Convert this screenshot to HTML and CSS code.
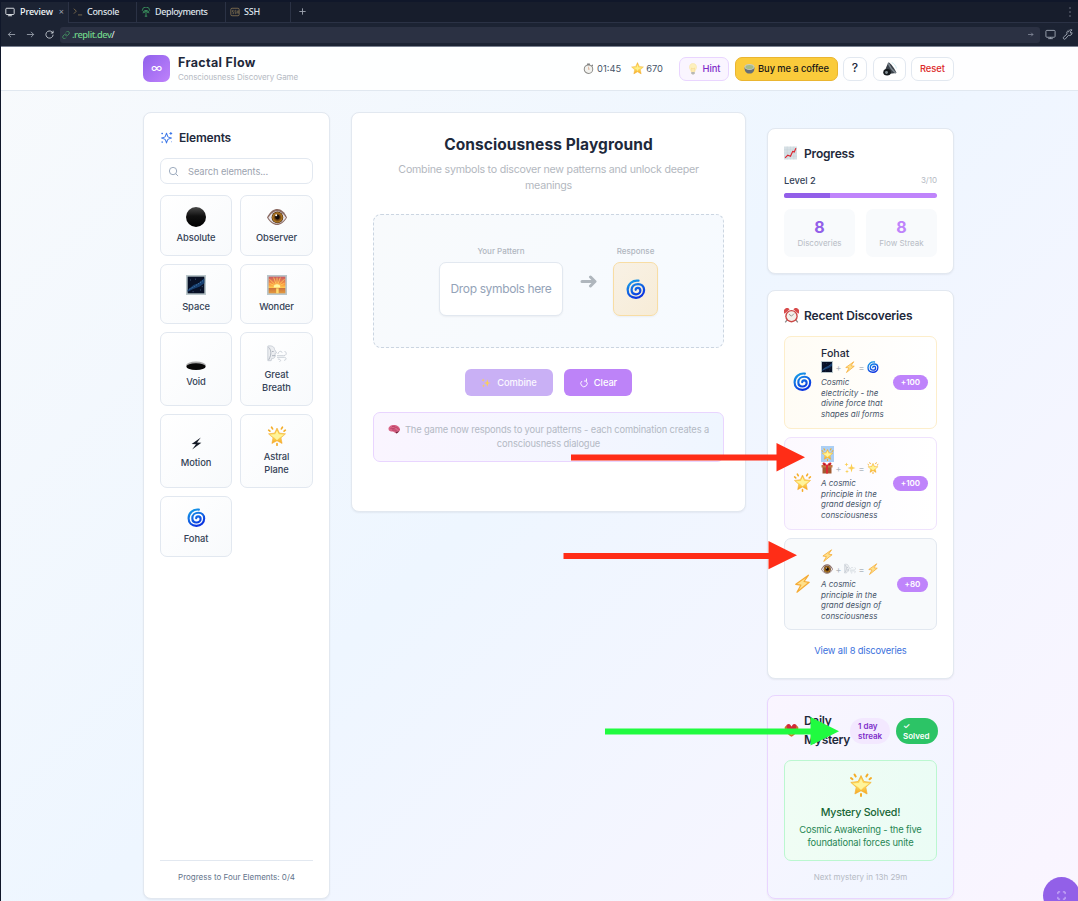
FILE: index.html
```html
<!DOCTYPE html>
<html lang="en">
<head>
<meta charset="utf-8">
<title>Fractal Flow</title>
<link rel="stylesheet" href="styles.css">
</head>
<body>
<svg class="sprite" aria-hidden="true">
  <defs>
    <linearGradient id="g-blue" x1="0" y1="0" x2="0.5" y2="1"><stop offset="0" stop-color="#19a5e8"/><stop offset="1" stop-color="#0a35e0"/></linearGradient>
    <linearGradient id="g-gold" x1="0" y1="0" x2="0" y2="1"><stop offset="0" stop-color="#f9b429"/><stop offset="0.5" stop-color="#fde36a"/><stop offset="1" stop-color="#f6a51c"/></linearGradient>
    <linearGradient id="g-black" x1="0" y1="0" x2="0" y2="1"><stop offset="0" stop-color="#4a4a4a"/><stop offset="0.45" stop-color="#111"/><stop offset="1" stop-color="#000"/></linearGradient>
    <linearGradient id="g-sun" x1="0" y1="0" x2="0" y2="1"><stop offset="0" stop-color="#c95b62"/><stop offset="0.45" stop-color="#fb9440"/><stop offset="0.65" stop-color="#ffc84d"/><stop offset="0.66" stop-color="#c9713e"/><stop offset="1" stop-color="#e59a3d"/></linearGradient>
    <radialGradient id="g-iris"><stop offset="0.2" stop-color="#1a0d05"/><stop offset="0.45" stop-color="#5b3510"/><stop offset="1" stop-color="#c98b25"/></radialGradient>
  </defs>
  <symbol id="orb" viewBox="0 0 24 24"><circle cx="12" cy="12" r="12" fill="url(#g-black)"/></symbol>
  <symbol id="eye" viewBox="0 0 24 24"><path d="M0 12.500C4 5 8 2.500 12.500 2.500S21 6 24 12.500C20 19 16 21.500 12 21.500S4 19 0 12.500z" fill="#8b6b63"/><path d="M1.500 13C5 7 9 5 12.500 5S20 8 22.800 13C19 18 16 20 12 20S5 18 1.500 13z" fill="#e9e5ea"/><circle cx="12.500" cy="12.500" r="7" fill="#4a2b14"/><circle cx="12.500" cy="12.500" r="6.200" fill="url(#g-iris)"/><circle cx="12.500" cy="12" r="2.600" fill="#120a08"/><circle cx="11" cy="10" r="1.200" fill="#fff"/></symbol>
  <symbol id="space" viewBox="0 0 24 24"><path fill="#b9c6ca" d="M0 0h24v24H0z"/><path fill="#081127" d="M2 2h20v20H2z"/><path d="M2 18L9 12L15 10L22 4V10L16 14L8 17L2 20z" fill="#173f70"/><path d="M4 17L10 14L14 11L20 7" fill="none" stroke="#5585b3" stroke-width="1.100" stroke-dasharray="1.300 1.700"/><path d="M5 6h1M11 5h1M17 18h1M19 14h1M8 20h1" stroke="#51709b"/></symbol>
  <symbol id="sunrise" viewBox="0 0 24 24"><path fill="#b9c6ca" d="M0 0h24v24H0z"/><path fill="url(#g-sun)" d="M2 2h20v20H2z"/><path d="M12 14L3 5M12 14L8 3M12 14V3M12 14L16 3M12 14L21 5M12 14L3 10M12 14L21 10" stroke="#ffd85c" stroke-width=".9"/><path d="M8 15a4 4 0 0 1 8 0z" fill="#fff6a2"/><path d="M11 16h3v6h-3z" fill="#ffdb6d"/></symbol>
  <symbol id="hole" viewBox="0 0 24 24"><ellipse cx="12" cy="18.800" rx="12" ry="5" fill="#aaa"/><ellipse cx="12" cy="20" rx="11.500" ry="4" fill="#080808"/></symbol>
  <symbol id="wind" viewBox="0 0 24 24"><g fill="none" stroke="#c3c9d1" stroke-width="1"><path d="M1 2.500c5-1 8 1 8 4l2.500 4-2 1c1 5-1 6-4 6L5 20H1z" fill="#eceef1"/><path d="M2 4c3 3 4 8 0 15M6 9h2M6 14h4" stroke="#a3abb6"/><path d="M13 12c1-4 5-4 5-1.500M12 14h8c4 0 4-5 1-5M12 16h9c3 0 2 4-.500 3.500M13 18c4 0 4 3 2 3"/></g></symbol>
  <symbol id="swirl" viewBox="0 0 24 24"><path d="M15 2C8 1 2 6 2 13c0 6 4 9.500 10 9.500 5.500 0 9.700-4 9.700-9.300C21.700 8.500 18.500 6 14.500 6 10 6 6.700 9 6.700 13s2.500 5.300 5.300 5.300c3 0 5.200-2 5.200-4.500 0-2-1.300-3.300-3-3.300-1.600 0-2.600 1.100-2.600 2.500" fill="none" stroke="url(#g-blue)" stroke-linecap="round" stroke-width="2.700"/></symbol>
  <symbol id="star" viewBox="0 0 24 24"><path d="M12 1l3.300 7.100 7.700.9-5.700 5.300 1.500 7.700L12 18.200 5.200 22l1.500-7.700L1 9l7.700-.9z" fill="url(#g-gold)" stroke="#f3b33c" stroke-width=".8"/><path d="M12 4l1.500 6 5 .500-4.500 3-2 3-2-3-4.500-3 5-.5z" fill="#fff08c"/></symbol>
  <symbol id="glow" viewBox="0 0 24 24"><path d="M12 2.500l2.900 6 7.300.9-5.400 4.800 1.300 6.800L12 17.700 5.900 21l1.300-6.800L1.800 9.400l7.300-.9z" fill="url(#g-gold)" stroke="#f5ad32" stroke-width=".7" stroke-linejoin="round"/><path d="M12 5l2 5 6 .500-5 3.500-3 3-3-3-5-3.500 6-.5z" fill="#fff49b"/><path d="M5.500 1.500l1.200 2M18.500 1.500l-1.200 2M2 5l1.500 1.200M22 5l-1.500 1.200M12 21v2" stroke="#f4ad28" stroke-width="2" stroke-linecap="round"/></symbol>
  <symbol id="bolt" viewBox="0 0 24 24"><path d="M19.500 1.500L3.500 13l6.500 1L5 23l15.500-12.500-6.500-1z" fill="#ffe08a" stroke="#f5ab35" stroke-width="1.500" stroke-linejoin="round"/></symbol>
  <symbol id="zap" viewBox="0 0 24 24"><path d="M20 1L3 13l8 .5L4 23l17-12.500-8-.5z" fill="#151b27"/></symbol>
  <symbol id="sparkle" viewBox="0 0 24 24"><path d="M15 3l2 7 6 2-6 2-2 7-2-7-6-2 6-2zM5 1l1.200 3L9 5 6.200 6 5 9 3.800 6 1 5l2.800-1zM6 15l1 3 3 1-3 1-1 3-1-3-3-1 3-1z" fill="#fbcf55"/></symbol>
  <symbol id="gift" viewBox="0 0 24 24"><path fill="#a25a32" d="M3 10h18v13H3z"/><path fill="#c37642" d="M1 6h22v5H1z"/><path fill="#dd2834" d="M10 6h4v17h-4zM12 7C3 8 1 2 5 1s7 6 7 6 3-7 7-6 2 7-7 6z"/><path d="M5 4l3 2M19 4l-3 2" stroke="#87131d" stroke-width="1.500"/></symbol>
  <symbol id="heart-box" viewBox="0 0 24 24"><path d="M1 7c2-5 9-4 11-1 2-3 9-4 11 1 0 6-5 11-11 15C6 18 1 13 1 7z" fill="#c97a2d"/><path d="M4 3c5-4 7 1 8 3 1-2 3-7 8-3l-1 6-7 1-7-1z" fill="#d22b38"/><path d="M5 13l7 5 7-5" stroke="#f0b44c" stroke-width="2" fill="none"/></symbol>
  <symbol id="chart" viewBox="0 0 24 24"><path fill="#d7e0e5" d="M0 0h24v24H0z"/><path d="M6 0v24M12 0v24M18 0v24M0 6h24M0 12h24M0 18h24" stroke="#c3cfd6" stroke-width=".7"/><path d="M2 21l5-5 5 2 4-9 3 1 3-7" fill="none" stroke="#dc2731" stroke-width="2.200"/></symbol>
  <symbol id="alarm" viewBox="0 0 24 24"><path d="M5 19l-3 4M19 19l3 4" stroke="#888" stroke-width="2"/><path d="M1 9a5 5 0 0 1 8-7zM23 9a5 5 0 0 0-8-7z" fill="#d84a4a"/><circle cx="12" cy="13" r="10" fill="#cc4745"/><circle cx="12" cy="13" r="7.800" fill="#f3f0ea"/><path d="M12 13L8 10M12 13l4-4" stroke="#777" stroke-width="1.200"/></symbol>
  <symbol id="watch" viewBox="0 0 24 24"><path d="M9 1h6v4H9zM18 5l3-2 1 2-2 3z" fill="#777"/><circle cx="12" cy="13.500" r="9.300" fill="#f2f2ee" stroke="#8b8b88" stroke-width="2.200"/><path d="M12 14V8M12 14l3-1" stroke="#d89a79" stroke-width="1.300"/></symbol>
  <symbol id="bulb" viewBox="0 0 24 24"><path d="M12 1c-5 0-7 3.500-7 7.300C5 13 8 14 8.500 18h7c.5-4 3.500-5 3.500-9.700C19 4.500 17 1 12 1z" fill="#fdf0bd" stroke="#f6e2a0"/><path d="M8.500 18h7v3l-2 2h-3l-2-2z" fill="#b8b8b3"/><path d="M10 17l-1-7 3 2 3-2-1 7" fill="none" stroke="#f5cf7c"/></symbol>
  <symbol id="tea" viewBox="0 0 24 24"><path d="M1 9c0 8 3 14 11 14s11-6 11-14z" fill="#687078"/><ellipse cx="12" cy="8.500" rx="11" ry="6.500" fill="#c8cac5"/><ellipse cx="12" cy="8.800" rx="8.800" ry="4.600" fill="#a4bc87"/></symbol>
  <symbol id="speaker" viewBox="0 0 24 24"><path d="M9 1c3-1 13 13 14 18l-11 1-9-5z" fill="#3a4149"/><path d="M9 2c2 5 8 13 13 17" stroke="#7d878f" stroke-width="2.500" fill="none"/><ellipse cx="7" cy="17.500" rx="6.500" ry="5.500" fill="#15191d"/><circle cx="6" cy="18" r="2.500" fill="#828d93"/><path d="M15 1c4 2 7 5 8 10" stroke="#c8e7ee" stroke-width="1.500" fill="none"/></symbol>
  <symbol id="brain" viewBox="0 0 24 24"><path d="M0 12c0-5 5-8 11-8s12 4 12 9c0 4-3 5-6 4l-1 3c-5 0-5-3-8-3-4 0-8-1-8-5z" fill="#d96486"/><path d="M4 11c3-2 4 2 7 0s3-4 6-2 2 4 5 4M7 7c3-1 4 1 6-1M7 14c3 1 5-1 9 1" fill="none" stroke="#a72e54" stroke-width="1.300"/><path d="M14 17c3 1 6 0 7-2-1 5-3 5-6 6z" fill="#77203a"/></symbol>
  <symbol id="monitor" viewBox="0 0 24 24"><path d="M4 3h16q2 0 2 2v11q0 2-2 2H4q-2 0-2-2V5q0-2 2-2zM12 18v3M7 21h10" fill="none" stroke="currentColor" stroke-width="2"/></symbol>
</svg>

<div class="app">
  <div class="tabs">
    <div class="tab tab-active"><svg class="ic10"><use href="#monitor"/></svg><span>Preview</span><i class="close">×</i></div>
    <div class="tab tab-console"><svg class="ic10 amber" viewBox="0 0 24 24"><path d="M2 4l6 6-6 6M12 19h10"/></svg><span>Console</span></div>
    <div class="tab tab-deploy"><svg class="ic10 green" viewBox="0 0 24 24"><path d="M12 11v12M5 15a7 7 0 1 1 14 0M8 14a4 4 0 1 1 8 0M3 9a9 9 0 0 1 18 0M9 22h6"/></svg><span>Deployments</span></div>
    <div class="tab tab-ssh"><svg class="ic10 amber" viewBox="0 0 24 24"><rect x="2" y="3" width="20" height="18" rx="3"/><path d="M9 8H6v4h3v4H6M14 8h-2v4h2v4h-2M17 8v8M20 8v8M17 12h3" stroke-width="1.500"/></svg><span>SSH</span></div>
    <svg class="plus" viewBox="0 0 10 10"><path d="M5 1.500v7M1.500 5h7"/></svg>
    <svg class="kebab" viewBox="0 0 4 10"><path d="M1.500 1h1M1.500 5h1M1.500 9h1"/></svg>
  </div>
  <div class="address">
    <svg class="nav" viewBox="0 0 10 10"><path d="M9 5H1.500M4.500 2l-3 3 3 3"/></svg>
    <svg class="nav" viewBox="0 0 10 10"><path d="M1 5h7.500M5.500 2l3 3-3 3"/></svg>
    <svg class="nav reload" viewBox="0 0 10 10"><path d="M9 5.200A4 4 0 1 1 7.800 2.200L9 3.400M9 .8v2.600H6.500"/></svg>
    <div class="url"><svg class="link" viewBox="0 0 24 24"><path d="M10 13a5 5 0 0 0 7 0l4-4a5 5 0 0 0-7-7l-2 2M14 11a5 5 0 0 0-7 0l-4 4a5 5 0 0 0 7 7l2-2"/></svg><span>.replit.dev<b>/</b></span><svg class="go" viewBox="0 0 10 10"><path d="M1.500 5h7M6 2.500L8.500 5 6 7.500"/></svg></div>
    <svg class="tool"><use href="#monitor"/></svg>
    <svg class="tool wrench" viewBox="0 0 24 24"><path d="M14 7a6 6 0 0 1 8-5l-4 4 1 3 3-1a6 6 0 0 1-8 6l-7 8a3 3 0 0 1-4-4l8-7a6 6 0 0 1 3-8"/></svg>
  </div>

  <header class="top">
    <div class="logo">∞</div>
    <div class="brand"><h1>Fractal Flow</h1><p>Consciousness Discovery Game</p></div>
    <div class="stat time"><svg><use href="#watch"/></svg>01:45</div>
    <div class="stat score"><svg><use href="#star"/></svg>670</div>
    <button class="btn hint"><svg><use href="#bulb"/></svg>Hint</button>
    <button class="btn coffee"><svg><use href="#tea"/></svg>Buy me a coffee</button>
    <button class="btn help">?</button>
    <button class="btn sound"><svg><use href="#speaker"/></svg></button>
    <button class="btn reset">Reset</button>
  </header>

  <main class="main">
    <section class="card elements">
      <h2 class="title"><svg class="spark" viewBox="0 0 24 24"><path d="M12 4l2 5.500q.5 1.500 1.500 1.800L21 13l-5.500 2q-1 .5-1.500 1.500L12 22l-2-5.500Q9.500 15.500 8.500 15L3 13l5.500-1.700q1-.3 1.500-1.800zM20 2v5M17.500 4.500h5M4 3v3M2.500 4.500h3M4 19v3M21 20h1"/></svg>Elements</h2>
      <div class="search"><svg viewBox="0 0 24 24"><circle cx="11" cy="11" r="8"/><path d="M17 17l5 5"/></svg>Search elements...</div>
      <div class="grid">
        <div class="tile"><svg><use href="#orb"/></svg>Absolute</div>
        <div class="tile"><svg><use href="#eye"/></svg>Observer</div>
        <div class="tile"><svg><use href="#space"/></svg>Space</div>
        <div class="tile"><svg><use href="#sunrise"/></svg>Wonder</div>
        <div class="tile"><svg><use href="#hole"/></svg>Void</div>
        <div class="tile"><svg><use href="#wind"/></svg><span>Great<br>Breath</span></div>
        <div class="tile"><svg class="small-zap"><use href="#zap"/></svg>Motion</div>
        <div class="tile"><svg><use href="#glow"/></svg><span>Astral<br>Plane</span></div>
        <div class="tile"><svg class="sw"><use href="#swirl"/></svg>Fohat</div>
      </div>
      <div class="four">Progress to Four Elements: 0/4</div>
    </section>

    <section class="card play">
      <h2>Consciousness Playground</h2>
      <p class="sub">Combine symbols to discover new patterns and unlock deeper<br>meanings</p>
      <div class="zone">
        <div class="pattern"><span class="cap">Your Pattern</span><div class="drop">Drop symbols here</div></div>
        <svg class="arrow" viewBox="0 0 17 13"><path d="M2 6.500h12M10.500 2L15 6.500 10.500 11"/></svg>
        <div class="pattern"><span class="cap">Response</span><div class="resp"><svg><use href="#swirl"/></svg></div></div>
      </div>
      <div class="actions">
        <button class="act combine"><svg><use href="#sparkle"/></svg>Combine</button>
        <button class="act clear"><svg viewBox="0 0 10 10"><path d="M7.200 3.200A3.200 3.200 0 1 1 3 3M5 3h2.500V.5"/></svg>Clear</button>
      </div>
      <div class="note"><svg><use href="#brain"/></svg>The game now responds to your patterns - each combination creates a<br>consciousness dialogue</div>
    </section>

    <aside class="side">
      <section class="card progress">
        <h2 class="title"><svg class="chart"><use href="#chart"/></svg>Progress</h2>
        <div class="level"><span>Level 2</span><small>3/10</small></div>
        <div class="bar"><div style="width:30%"></div></div>
        <div class="stats"><div class="box"><b>8</b>Discoveries</div><div class="box light"><b>8</b>Flow Streak</div></div>
      </section>

      <section class="card recent">
        <h2 class="title"><svg class="alarm"><use href="#alarm"/></svg>Recent Discoveries</h2>
        <div class="item gold"><svg class="big"><use href="#swirl"/></svg><div class="info"><h3>Fohat</h3><div class="formula"><svg><use href="#space"/></svg>+<svg><use href="#bolt"/></svg>=<svg><use href="#swirl"/></svg></div><p>Cosmic<br>electricity - the<br>divine force that<br>shapes all forms</p></div><span class="pts">+100</span></div>
        <div class="item violet"><svg class="big"><use href="#glow"/></svg><div class="info"><h3><span class="sel"><svg><use href="#glow"/></svg></span></h3><div class="formula"><svg><use href="#gift"/></svg>+<svg><use href="#sparkle"/></svg>=<svg><use href="#glow"/></svg></div><p>A cosmic<br>principle in the<br>grand design of<br>consciousness</p></div><span class="pts">+100</span></div>
        <div class="item slate"><svg class="big"><use href="#bolt"/></svg><div class="info"><h3><span class="em"><svg><use href="#bolt"/></svg></span></h3><div class="formula"><svg><use href="#eye"/></svg>+<svg><use href="#wind"/></svg>=<svg><use href="#bolt"/></svg></div><p>A cosmic<br>principle in the<br>grand design of<br>consciousness</p></div><span class="pts short">+80</span></div>
        <a class="all">View all 8 discoveries</a>
      </section>

      <section class="card daily">
        <div class="dhead"><svg><use href="#heart-box"/></svg><h2>Daily<br>Mystery</h2><span class="streak">1 day<br>streak</span><span class="solved">✓<br>Solved</span></div>
        <div class="win"><svg><use href="#glow"/></svg><h3>Mystery Solved!</h3><p>Cosmic Awakening - the five<br>foundational forces unite</p></div>
        <p class="next">Next mystery in 13h 29m</p>
      </section>
    </aside>
  </main>

  <button class="fab"><svg viewBox="0 0 10 10"><path d="M1 3.500V1h2.500M6.500 1H9v2.500M9 6.500V9H6.500M3.500 9H1V6.500"/></svg></button>
  <svg class="marks" viewBox="0 0 1078 901">
    <path fill="#ff2d17" d="M571 454.500h205.500V443L805 457.300 776.500 471.500V460.500H571zM563.500 553h205V541L797 555.200 768.500 569.300V559h-205z"/>
    <path fill="#20fb40" d="M605 728.500h205.500V717L839 731.300 810.500 745.500V734.500H605z"/>
  </svg>
</div>
</body>
</html>
```
FILE: styles.css
```css
* { box-sizing: border-box; }
body { margin: 0; font-family: Inter, sans-serif; overflow: hidden; }
h1, h2, h3, p { margin: 0; }
button { font-family: inherit; padding: 0; }
svg { flex: none; display: block; }
.sprite { position: absolute; width: 0; height: 0; }
.app { position: relative; width: 1078px; height: 901px; overflow: hidden; border-left: 1px solid #10172a; background: linear-gradient(135deg, #f8fafc 0%, #eef6ff 50%, #faf5ff 100%); }

/* browser chrome */
.tabs { display: flex; height: 23px; background: #171d2c; border-top: 2px solid #10172a; border-bottom: 1px solid #2b3245; font-family: "Noto Sans", sans-serif; font-size: 9px; font-weight: 500; color: #dfe3ea; }
.tab { display: flex; align-items: center; gap: 4px; padding: 0 0 1px 4px; border-right: 1px solid #2b3245; height: 20px; }
.tab-active { width: 68px; background: #1c2333; color: #f5f9fc; height: 21px; gap: 5px; padding-bottom: 2px; }
.tab-active span { letter-spacing: -.1px; }
.tab-console { width: 68px; letter-spacing: -.3px; }
.tab-deploy { width: 89px; letter-spacing: -.4px; }
.tab-ssh { width: 65px; letter-spacing: -.2px; }
.close { font-style: normal; font-size: 9px; color: #9aa1ae; font-weight: 400; margin-left: 1px; }
.ic10 { width: 10px; height: 10px; fill: none; stroke: currentColor; stroke-width: 2; }
.amber { color: #897653; }
.green { color: #3c9b62; }
.plus { width: 9px; height: 9px; margin: 5px 0 0 7px; fill: none; stroke: #a0a6b2; }
.kebab { width: 4px; height: 10px; margin: 5px 6px 0 auto; stroke: #b6bbc5; }
.address { display: flex; align-items: center; height: 24px; padding: 0 4px 0 6px; background: #1c2333; border-bottom: 1px solid #798090; }
.nav { width: 9px; height: 9px; margin-right: 10px; fill: none; stroke: #a6adb9; stroke-width: .9; }
.reload { margin-right: 6px; stroke: #d7dce3; }
.url { flex: 1; display: flex; align-items: center; height: 16px; margin-right: 5px; padding: 0 6px 0 2px; border-radius: 3px; background: #2b3143; color: #72d68a; font: 500 9.300px "Noto Sans", sans-serif; letter-spacing: -.45px; }
.url b { color: #eef2f7; font-weight: 400; }
.link { width: 8px; height: 8px; margin-right: 2px; fill: none; stroke: #4db36d; stroke-width: 2; }
.go { width: 7px; height: 7px; margin-left: auto; fill: none; stroke: #949baa; }
.tool { width: 11px; height: 11px; color: #a0a7b3; margin-right: 6px; }
.wrench { margin-right: 1px; fill: none; stroke: #a0a7b3; stroke-width: 2; }

/* header */
.top { display: flex; align-items: center; height: 44px; padding: 0 124px 0 142px; background: rgba(255,255,255,.9); border-bottom: 1px solid #e1e8f0; }
.logo { width: 27px; height: 27px; border-radius: 7px; background: linear-gradient(135deg, #9061ec, #bf82fb); color: #fff; text-align: center; font-size: 12px; line-height: 26px; }
.brand { margin-left: 8px; flex: 1; }
.brand h1 { font-size: 12.500px; line-height: 16px; font-weight: 700; color: #1e293b; letter-spacing: .33px; }
.brand p { font-size: 8px; line-height: 11px; color: #b5bac3; letter-spacing: -.07px; margin-top: 1px; }
.stat { display: flex; align-items: center; font-size: 9.330px; color: #475569; }
.time svg { width: 11px; height: 11px; margin-right: 3px; }
.score { margin: 0 16px 0 10px; }
.score svg { width: 13px; height: 13px; margin-right: 2px; }
.btn { display: flex; align-items: center; justify-content: center; height: 24px; border: 1px solid #e2e8f0; border-radius: 7px; background: #fff; font-size: 9.330px; font-weight: 500; }
.hint { width: 50px; margin-right: 6px; background: #faf5ff; border-color: #e9d5ff; color: #7e2bc9; }
.hint svg { width: 12px; height: 12px; margin-right: 3px; }
.coffee { width: 103px; margin-right: 5px; background: #facb3b; border-color: #eab530; color: #171717; letter-spacing: -.08px; }
.coffee svg { width: 11px; height: 11px; margin-right: 3px; }
.help { width: 24px; margin-right: 6px; font-size: 12px; line-height: 20px; padding-bottom: 2px; color: #1e293b; }
.sound { width: 33px; margin-right: 5px; }
.sound svg { width: 14px; height: 14px; }
.reset { width: 43px; color: #dc2626; }

/* columns */
.main { display: grid; grid-template-columns: 187px 395px 187px; column-gap: 21px; align-items: start; padding: 21px 0 0 142px; }
.card { background: #fff; border: 1px solid #e2e8f0; border-radius: 8px; box-shadow: 0 1px 2px rgba(15,23,42,.06); }
.title { display: flex; align-items: center; height: 18px; padding-bottom: 2px; font-size: 12px; font-weight: 600; letter-spacing: -.18px; color: #1e293b; }
.elements { height: 787px; padding: 16px; display: flex; flex-direction: column; }
.elements .title { margin-bottom: 11px; }
.spark { width: 13px; height: 13px; margin-right: 6px; fill: none; stroke: #3b76e8; stroke-width: 1.900; stroke-linejoin: round; }
.search { display: flex; align-items: center; height: 26px; padding-left: 7px; border: 1px solid #e2e8f0; border-radius: 7px; font-size: 9.330px; color: #9ca3af; letter-spacing: -.1px; }
.search svg { width: 11px; height: 11px; margin-right: 9px; fill: none; stroke: #94a3b8; stroke-width: 2; }
.grid { display: grid; grid-template-columns: 72px 73px; grid-template-rows: 61px 60px 74px 74px 61px; gap: 8px; margin-top: 11px; }
.tile { display: flex; flex-direction: column; align-items: center; justify-content: center; gap: 4.500px; border: 1px solid #e2e8f0; border-radius: 7px; background: linear-gradient(135deg, #fff, #f8fafc); font-size: 9.330px; line-height: 13px; font-weight: 500; letter-spacing: -.06px; color: #334155; text-align: center; }
.tile svg { width: 20px; height: 20px; }
.tile .small-zap { width: 13px; height: 13px; margin: 4px 0 2px; }
.tile .sw { width: 19px; height: 19px; margin: 0 0 1px; }
.four { margin-top: auto; height: 22px; border-top: 1px solid #e2e8f0; padding-top: 10px; font-size: 8px; line-height: 12px; color: #64748b; text-align: center; }

/* playground */
.play { height: 400px; padding: 21px; text-align: center; }
.play h2 { font-size: 15.500px; line-height: 22px; font-weight: 700; letter-spacing: .08px; color: #1e293b; }
.sub { margin: 6px 0 20px; font-size: 10.670px; line-height: 16px; letter-spacing: -.245px; color: #b3b8c0; }
.zone { display: flex; justify-content: center; height: 134px; padding-top: 31px; border: 1px dashed #cbd5e1; border-radius: 8px; background: linear-gradient(135deg, #f8fafc, #f6faff); }
.cap { display: block; height: 16px; font-size: 8px; line-height: 11px; font-weight: 500; color: #b0b6bf; }
.drop { width: 124px; height: 54px; border: 1px solid #e2e8f0; border-radius: 7px; background: #fff; box-shadow: 0 1px 2px rgba(15,23,42,.05); font-size: 12px; line-height: 51px; letter-spacing: -.36px; color: #94a3b8; }
.arrow { width: 17px; height: 13px; margin: 29px 16px 0 17px; fill: none; stroke: #afb6bd; stroke-width: 3; stroke-linecap: round; stroke-linejoin: round; }
.resp { display: flex; align-items: center; justify-content: center; width: 45px; height: 54px; padding-bottom: 1px; border: 1px solid #f8dda4; border-radius: 7px; background: linear-gradient(135deg, #f8f1e5, #f7ecd7); box-shadow: 0 1px 2px rgba(15,23,42,.05); }
.resp svg { width: 20px; height: 20px; }
.actions { display: flex; justify-content: center; gap: 11px; margin: 21px 0 16px; }
.act { display: flex; align-items: center; justify-content: center; height: 27px; border: 0; border-radius: 6px; color: #fff; background: #bd83f8; font-size: 9.330px; font-weight: 500; letter-spacing: -.08px; }
.combine { width: 88px; background: #c9b0f5; color: #fbf8ff; }
.act svg { width: 10px; height: 10px; margin-right: 5px; fill: none; stroke: #fff; stroke-width: .9; }
.combine svg { stroke: none; margin-right: 6px; }
.clear { width: 68px; }
.note { height: 50px; padding: 10px 0 0; border: 1px solid #e9d5ff; border-radius: 7px; background: linear-gradient(90deg, #faf5ff, #eff6ff); font-size: 9.330px; line-height: 14px; letter-spacing: -.13px; color: #b3b9c4; }
.note svg { display: inline-block; width: 13px; height: 12px; margin-right: 4px; vertical-align: -2px; }

/* sidebar */
.side { display: flex; flex-direction: column; gap: 16px; padding-top: 16px; }
.progress { height: 146px; padding: 16px; }
.chart { width: 13px; height: 14px; margin-right: 7px; }
.level { display: flex; justify-content: space-between; align-items: center; margin-top: 10px; height: 14px; font-size: 9.330px; font-weight: 500; color: #334155; }
.level small { font-size: 8px; font-weight: 400; color: #b5bac3; }
.bar { height: 5px; margin-top: 6px; border-radius: 3px; background: #bf84fb; overflow: hidden; }
.bar div { height: 5px; background: #925fe9; }
.stats { display: grid; grid-template-columns: 1fr 1fr; gap: 11px; margin-top: 11px; }
.box { height: 48px; padding-top: 8px; border-radius: 7px; background: #f8fafc; font-size: 8px; line-height: 11px; color: #b7bcc5; text-align: center; }
.box b { display: block; margin-bottom: 1px; font-size: 16px; line-height: 20px; color: #925fe9; }
.light b { color: #bf84fb; }
.recent { height: 389px; padding: 16px; }
.alarm { width: 15px; height: 15px; margin-right: 5px; }
.recent .title { margin-bottom: 11px; }
.item { display: flex; align-items: center; height: 93px; margin-bottom: 8px; padding: 0 8px; border: 1px solid #fdeecb; border-radius: 7px; background: linear-gradient(90deg, #fffcf5, #fff); }
.violet { border-color: #efe2fd; background: linear-gradient(90deg, #fcf9ff, #fff); }
.slate { height: 92px; border-color: #e2e8f0; background: #f8fafc; }
.big { width: 19px; height: 19px; margin: 0 9px 2px 0; }
.info { flex: 1; align-self: flex-start; padding-top: 8px; }
.info h3 { height: 16px; font-size: 10.670px; line-height: 17px; font-weight: 500; color: #1e293b; }
.sel, .em { display: flex; align-items: center; width: 13px; height: 16px; }
.sel { background: #abcff5; }
.sel svg, .em svg { width: 13px; height: 13px; }
.formula { display: flex; align-items: center; gap: 2.500px; height: 12px; font-size: 9px; color: #afb5bd; white-space: nowrap; }
.formula svg { width: 12px; height: 12px; }
.info p { margin-top: 4px; font-size: 8px; line-height: 10.670px; font-style: italic; color: #475569; white-space: nowrap; }
.pts { width: 35px; height: 15px; border-radius: 8px; background: #bf84fb; color: #fff; font-size: 8px; font-weight: 600; line-height: 15px; text-align: center; }
.short { width: 31px; }
.all { display: block; margin-top: 13px; font-size: 9.330px; line-height: 15px; letter-spacing: -.14px; color: #3970dd; text-align: center; }
.daily { height: 204px; padding: 16px; border-color: #e9d5ff; background: linear-gradient(135deg, #faf5ff, #eff6ff); }
.dhead { display: flex; align-items: center; height: 37px; margin-right: -1px; }
.dhead svg { width: 15px; height: 15px; margin-right: 5px; }
.dhead h2 { width: 46px; font-size: 12px; line-height: 19px; font-weight: 600; letter-spacing: -.3px; padding-bottom: 2px; color: #1e293b; }
.streak, .solved { height: 26px; border-radius: 13px; padding: 3px 0 0 8px; font-size: 8px; line-height: 10.670px; font-weight: 600; }
.streak { width: 40px; background: #f3e8ff; color: #7e2fca; }
.solved { width: 42px; margin-left: 6px; padding-left: 7px; background: #2cc466; color: #fff; }
.win { height: 101px; margin-top: 11px; padding-top: 12px; border: 1px solid #bbf7d0; border-radius: 7px; background: linear-gradient(90deg, #f0fdf4, #ebfcf5); text-align: center; }
.win svg { width: 24px; height: 24px; margin: 0 auto 8px; }
.win h3 { font-size: 10.670px; line-height: 16px; font-weight: 500; letter-spacing: -.22px; color: #166534; }
.win p { margin-top: 2px; font-size: 9.330px; line-height: 13px; letter-spacing: -.14px; color: #268653; }
.next { margin-top: 11px; font-size: 8px; line-height: 11px; color: #b5bac3; text-align: center; }

/* overlays */
.fab { position: absolute; left: 1042px; top: 877px; display: flex; align-items: center; justify-content: center; width: 37px; height: 37px; border: 0; border-radius: 50%; background: #9260e8; }
.fab svg { width: 9px; height: 9px; fill: none; stroke: #d9c5fa; }
.marks { position: absolute; left: -1px; top: 0; width: 1078px; height: 901px; pointer-events: none; }
```
